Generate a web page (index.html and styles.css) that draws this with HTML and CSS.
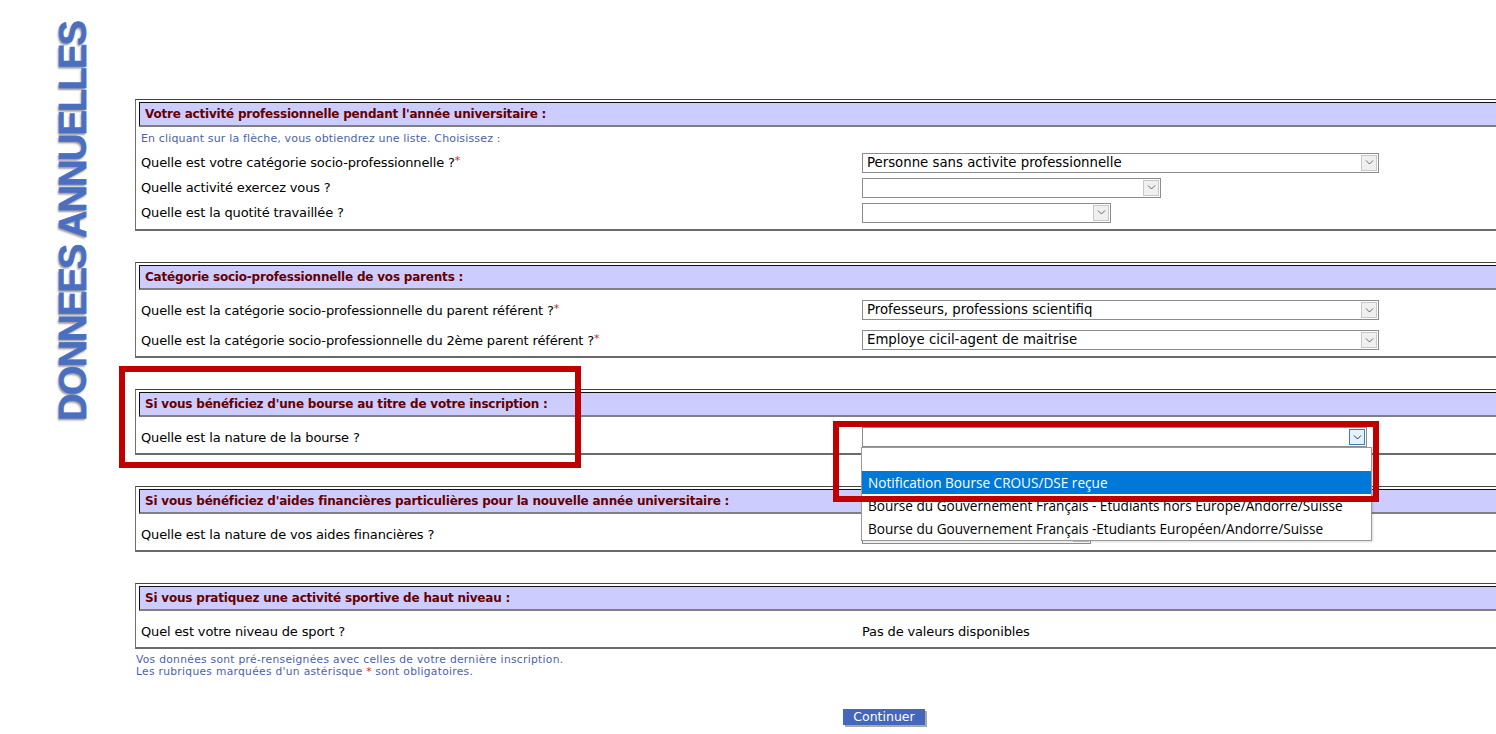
FILE: index.html
```html
<!DOCTYPE html>
<html lang="fr">
<head>
	<meta charset="UTF-8">
	<title>Données annuelles</title>
	<link rel="stylesheet" href="styles.css">
</head>
<body>
	<div class="page">
		<div class="side">
			<h1 class="title">DONNEES ANNUELLES</h1>
		</div>
		<div class="form">
			<div class="sect first">
				<div class="head">Votre activité professionnelle pendant l'année universitaire :</div>
				<div class="hint">En cliquant sur la flèche, vous obtiendrez une liste. Choisissez :</div>
				<div class="row row-s">
					<div class="lbl">Quelle est votre catégorie socio-professionnelle ?<span class="req">*</span></div>
					<div class="select sel-516"><span class="val">Personne sans activite professionnelle</span><span class="arrow"><svg width="9" height="5" viewBox="0 0 9 5"><polyline points="1,0.5 4.5,4 8,0.5" fill="none" stroke="#666" stroke-width="1"/></svg></span></div>
				</div>
				<div class="row row-s">
					<div class="lbl">Quelle activité exercez vous ?</div>
					<div class="select sel-298"><span class="val"></span><span class="arrow"><svg width="9" height="5" viewBox="0 0 9 5"><polyline points="1,0.5 4.5,4 8,0.5" fill="none" stroke="#666" stroke-width="1"/></svg></span></div>
				</div>
				<div class="row row-s">
					<div class="lbl">Quelle est la quotité travaillée ?</div>
					<div class="select sel-248"><span class="val"></span><span class="arrow"><svg width="9" height="5" viewBox="0 0 9 5"><polyline points="1,0.5 4.5,4 8,0.5" fill="none" stroke="#666" stroke-width="1"/></svg></span></div>
				</div>
			</div>

			<div class="sect">
				<div class="head">Catégorie socio-professionnelle de vos parents :</div>
				<div class="body">
					<div class="row">
						<div class="lbl">Quelle est la catégorie socio-professionnelle du parent référent ?<span class="req">*</span></div>
						<div class="select sel-516"><span class="val">Professeurs, professions scientifiq</span><span class="arrow"><svg width="9" height="5" viewBox="0 0 9 5"><polyline points="1,0.5 4.5,4 8,0.5" fill="none" stroke="#666" stroke-width="1"/></svg></span></div>
					</div>
					<div class="row">
						<div class="lbl">Quelle est la catégorie socio-professionnelle du 2ème parent référent ?<span class="req">*</span></div>
						<div class="select sel-516"><span class="val">Employe cicil-agent de maitrise</span><span class="arrow"><svg width="9" height="5" viewBox="0 0 9 5"><polyline points="1,0.5 4.5,4 8,0.5" fill="none" stroke="#666" stroke-width="1"/></svg></span></div>
					</div>
				</div>
			</div>

			<div class="sect">
				<div class="head">Si vous bénéficiez d'une bourse au titre de votre inscription :</div>
				<div class="body">
					<div class="row">
						<div class="lbl">Quelle est la nature de la bourse ?</div>
						<div class="select sel-504 open"><span class="val"></span><span class="arrow"><svg width="9" height="5" viewBox="0 0 9 5"><polyline points="1,0.5 4.5,4 8,0.5" fill="none" stroke="#333" stroke-width="1"/></svg></span>
							<ul class="options">
								<li>&nbsp;</li>
								<li class="on">Notification Bourse CROUS/DSE reçue</li>
								<li>Bourse du Gouvernement Français - Etudiants hors Europe/Andorre/Suisse</li>
								<li>Bourse du Gouvernement Français -Etudiants Européen/Andorre/Suisse</li>
							</ul>
						</div>
					</div>
				</div>
			</div>

			<div class="sect">
				<div class="head">Si vous bénéficiez d'aides financières particulières pour la nouvelle année universitaire :</div>
				<div class="body">
					<div class="row">
						<div class="lbl">Quelle est la nature de vos aides financières ?</div>
						<div class="select sel-228"><span class="val"></span><span class="arrow"><svg width="9" height="5" viewBox="0 0 9 5"><polyline points="1,0.5 4.5,4 8,0.5" fill="none" stroke="#666" stroke-width="1"/></svg></span></div>
					</div>
				</div>
			</div>

			<div class="sect last">
				<div class="head">Si vous pratiquez une activité sportive de haut niveau :</div>
				<div class="body">
					<div class="row">
						<div class="lbl">Quel est votre niveau de sport ?</div>
						<div class="plain">Pas de valeurs disponibles</div>
					</div>
				</div>
			</div>

			<p class="note">Vos données sont pré-renseignées avec celles de votre dernière inscription.<br>Les rubriques marquées d'un astérisque <span class="req">*</span> sont obligatoires.</p>

			<div class="actions">
				<button class="btn">Continuer</button>
			</div>
		</div>

		<div class="mark mark-1"></div>
		<div class="mark mark-2"></div>
	</div>
</body>
</html>
```

FILE: styles.css
```css
html, body{
	margin: 0;
	padding: 0;
	background: #fff;
	overflow: hidden;
}
body{
	font-family: "DejaVu Sans", Verdana, sans-serif;
	font-size: 13px;
	color: #000;
}
.page{
	position: relative;
	display: flex;
	width: 1496px;
	height: 734px;
}
.side{
	width: 135px;
	flex-shrink: 0;
	padding: 22px 0 0 53px;
	box-sizing: border-box;
}
.title{
	margin: 0;
	writing-mode: vertical-rl;
	transform: rotate(180deg);
	font-family: "Liberation Sans", Arial, sans-serif;
	font-weight: bold;
	font-size: 38px;
	line-height: 40px;
	letter-spacing: -1.8px;
	color: #4a6fc0;
	text-shadow: -2px -1px 2px #9a9a9a;
	-webkit-text-stroke: 0.6px #4a6fc0;
	white-space: nowrap;
}
.form{
	width: 1498px;
	flex-shrink: 0;
	padding-top: 99px;
}
.sect{
	border: 1px solid #707070;
	border-top-color: #444;
	border-bottom: 2px solid #6a6a6a;
	padding: 2px 0 0 3px;
	margin-bottom: 31px;
}
.sect.first{
	padding-bottom: 4px;
}
.sect.last{
	margin-bottom: 0;
}
.head{
	height: 22px;
	line-height: 22px;
	background: #ccccff;
	border-top: 1px solid #111;
	border-left: 1px solid #111;
	border-bottom: 2px solid #808080;
	padding-left: 5px;
	font-weight: bold;
	font-size: 12px;
	color: #660000;
	letter-spacing: -0.2px;
	white-space: nowrap;
}
.hint{
	margin: 6px 0 5px;
	padding-left: 2px;
	line-height: 12px;
	font-size: 11px;
	color: #4a5fae;
	letter-spacing: 0.15px;
}
.body{
	padding: 5px 0 1px;
}
.row{
	display: flex;
	align-items: center;
	height: 30px;
}
.row-s{
	height: 25px;
}
.lbl{
	width: 723px;
	flex-shrink: 0;
	box-sizing: border-box;
	padding-left: 2px;
	letter-spacing: -0.15px;
	white-space: nowrap;
}
.req{
	color: #e02020;
	font-size: 11px;
	vertical-align: top;
	line-height: 12px;
	letter-spacing: 0;
}
.plain{
	letter-spacing: -0.15px;
}
.select{
	position: relative;
	display: flex;
	height: 20px;
	box-sizing: border-box;
	border: 1px solid #8c8c8c;
	background: #fff;
}
.sel-516{ width: 517px; }
.sel-504{ width: 505px; }
.sel-298{ width: 299px; }
.sel-248{ width: 249px; }
.sel-228{ width: 229px; }
.val{
	flex: 1;
	padding-left: 4px;
	line-height: 18px;
	font-size: 13.3px;
	white-space: nowrap;
	overflow: hidden;
}
.arrow{
	width: 16px;
	height: 16px;
	margin: 1px;
	box-sizing: border-box;
	border: 1px solid #c8c8c8;
	background: #efefef;
	display: flex;
	align-items: center;
	justify-content: center;
}
.open .arrow{
	border-color: #3c7fb1;
	background: #e5f1fb;
}
.options{
	position: absolute;
	top: 19px;
	left: -2px;
	width: 509px;
	margin: 0;
	padding: 0;
	list-style: none;
	background: #fff;
	border: 1px solid #9a9a9a;
	box-shadow: 1px 1px 2px rgba(0,0,0,.15);
	z-index: 5;
	font-family: "Open Sans", "Noto Sans", sans-serif;
	font-size: 13.6px;
}
.options li{
	height: 23px;
	line-height: 23px;
	padding-left: 6px;
	white-space: nowrap;
}
.options li.on{
	background: #0078d7;
	color: #fff;
}
.note{
	margin: 5px 0 0 1px;
	font-size: 10.7px;
	line-height: 12px;
	color: #4a5fae;
	letter-spacing: 0.3px;
}
.note .req{
	font-size: 10.7px;
	vertical-align: baseline;
}
.actions{
	text-align: center;
	padding-top: 31px;
}
.btn{
	display: inline-block;
	font-family: "DejaVu Sans", Verdana, sans-serif;
	font-size: 12.5px;
	height: 16px;
	width: 82px;
	padding: 0;
	line-height: 16px;
	border: none;
	background: #4466bb;
	color: #fff;
	box-shadow: 2px 2px 0 #a8a8a8;
	vertical-align: top;
}
.mark{
	position: absolute;
	border: 6px solid #c00000;
	z-index: 10;
}
.mark-1{
	left: 119px;
	top: 366px;
	width: 450px;
	height: 90px;
}
.mark-2{
	left: 833px;
	top: 421px;
	width: 534px;
	height: 69px;
}
```
